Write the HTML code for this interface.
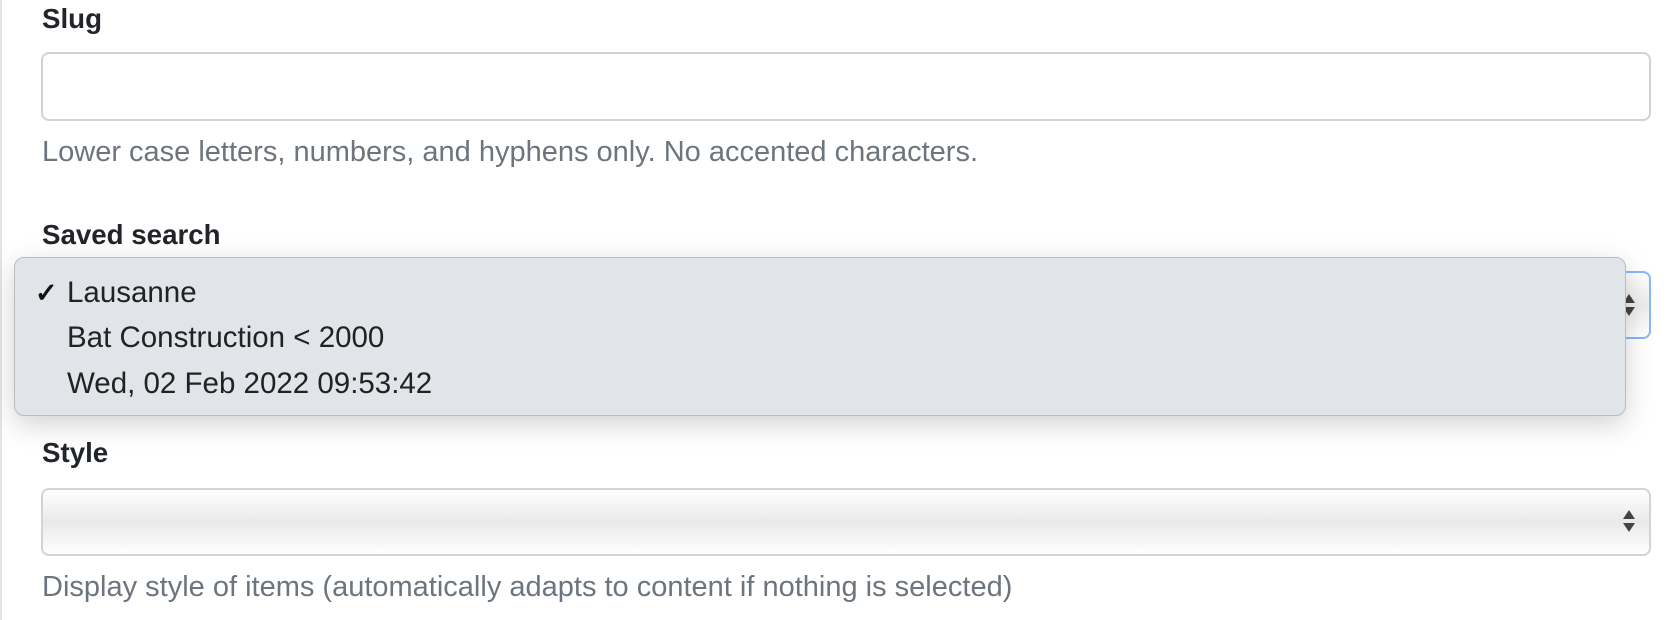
<!DOCTYPE html>
<html><head><meta charset="utf-8"><style>
html,body{margin:0;padding:0;background:#fff;width:1676px;height:620px;overflow:hidden;position:relative;font-family:"Liberation Sans",sans-serif;}
.vl{position:absolute;left:0;top:0;width:2px;height:620px;background:#e4e4e4}
.t{position:absolute;white-space:nowrap;font-size:29.5px;line-height:1}
.lbl{font-weight:bold;color:#212529;font-size:27.7px}
.help{color:#6c757d;font-size:29px}
.box{position:absolute;left:41px;width:1610px;box-sizing:border-box;border:2px solid #ced4da;border-radius:8px;background:#fff}
.arr{position:absolute;right:14px;width:0;height:0;border-left:6px solid transparent;border-right:6px solid transparent}
</style></head><body>
<div class="vl"></div>
<div class="t lbl" style="left:42px;top:5px">Slug</div>
<div class="box" style="top:52px;height:69px"></div>
<div class="t help" style="left:42px;top:138px">Lower case letters, numbers, and hyphens only. No accented characters.</div>
<div class="t lbl" style="left:42px;top:221px">Saved search</div>
<div class="box" style="top:271px;height:68px;border-color:#86b7fe;background:linear-gradient(#fff,#ececec 50%,#fff)">
  <div class="arr" style="top:21px;border-bottom:9px solid #444"></div>
  <div class="arr" style="top:34px;border-top:9px solid #444"></div>
</div>
<div style="position:absolute;left:14px;top:257px;width:1612px;height:159px;box-sizing:border-box;background:#e1e4e8;border:1px solid #b9bcc0;border-radius:10px;box-shadow:0 8px 28px rgba(0,0,0,0.18)"></div>
<div class="t" style="left:35px;top:280px;color:#111;font-size:27px;font-weight:bold">✓</div>
<div class="t" style="left:67px;top:278px;color:#222">Lausanne</div>
<div class="t" style="left:67px;top:323px;color:#222">Bat Construction &lt; 2000</div>
<div class="t" style="left:67px;top:369px;color:#222">Wed, 02 Feb 2022 09:53:42</div>
<div class="t lbl" style="left:42px;top:439px">Style</div>
<div class="box" style="top:488px;height:68px;background:linear-gradient(#fff,#e9e9e9 50%,#fff)">
  <div class="arr" style="top:20px;border-bottom:9px solid #444"></div>
  <div class="arr" style="top:33px;border-top:9px solid #444"></div>
</div>
<div class="t help" style="left:42px;top:573px">Display style of items (automatically adapts to content if nothing is selected)</div>
</body></html>
